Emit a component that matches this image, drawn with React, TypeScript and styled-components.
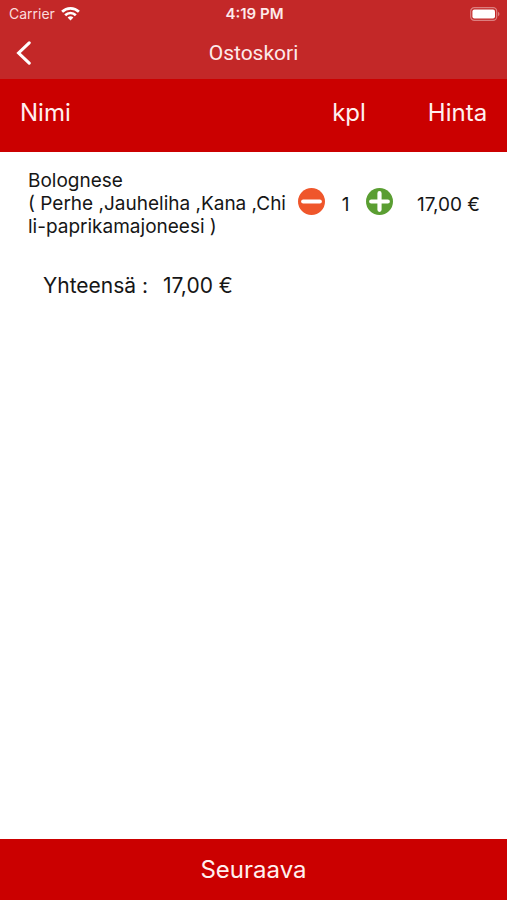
import React, { useState } from "react";
import styled, { createGlobalStyle } from "styled-components";

const GlobalStyle = createGlobalStyle`
  * { box-sizing: border-box; }
  body {
    margin: 0;
    background: #fff;
    color: #161616;
    font-family: Inter, "Liberation Sans", sans-serif;
  }
  button { font: inherit; border: 0; padding: 0; cursor: pointer; }
`;

const Screen = styled.div`
  min-height: 100vh;
  display: flex;
  flex-direction: column;
`;

const TopBar = styled.header`
  background: #c32828;
  color: #fff;
`;

const StatusBar = styled.div`
  height: 28px;
  padding: 0 7px 0 9px;
  display: grid;
  grid-template-columns: 1fr auto 1fr;
  align-items: center;
  font-size: 14px;
  line-height: 20px;
`;

const Carrier = styled.span`
  display: flex;
  align-items: center;
  gap: 6px;
  color: #fbdcdc;
`;

const Clock = styled.span`
  font-size: 15px;
  font-weight: 600;
  color: #fdeaea;
`;

const Battery = styled.span`
  justify-self: end;
  display: flex;
`;

const NavBar = styled.nav`
  height: 51px;
  padding: 0 12px 2px;
  display: grid;
  grid-template-columns: 1fr auto 1fr;
  align-items: center;
`;

const BackButton = styled.button`
  justify-self: start;
  width: 24px;
  height: 32px;
  display: flex;
  align-items: center;
  justify-content: center;
  background: none;
  color: #fff;
`;

const Title = styled.h1`
  margin: 0;
  font: 400 21px/28px Roboto, "Liberation Sans", sans-serif;
  color: #fdeaea;
`;

const Content = styled.main`
  flex: 1;
`;

const CartTable = styled.table`
  width: 100%;
  table-layout: fixed;
  border-collapse: collapse;
`;

const QuantityColumn = styled.col`
  width: 112px;
`;

const PriceColumn = styled.col`
  width: 105px;
`;

const HeadRow = styled.tr`
  height: 73px;
  background: #cb0000;
  color: #fff0f0;
`;

const HeadCell = styled.th<{ $align?: "left" | "center" }>`
  padding: 0 0 6px ${(p) => (p.$align === "left" ? 20 : 6)}px;
  text-align: ${(p) => p.$align ?? "center"};
  font-size: 24px;
  line-height: 28px;
  font-weight: 400;
`;

const NameCell = styled.td`
  padding: 17px 2px 12px 28px;
  font-size: 19px;
  line-height: 23px;
  word-break: break-all;
`;

const QuantityCell = styled.td`
  padding: 0;
`;

const Stepper = styled.div`
  display: flex;
  align-items: center;
  justify-content: space-between;
  padding: 0 9px 0 8px;
`;

const Quantity = styled.output`
  padding-top: 6px;
  font-size: 19px;
  line-height: 23px;
`;

const StepButton = styled.button<{ $color: string }>`
  width: 27px;
  height: 27px;
  display: flex;
  border-radius: 50%;
  background: ${(p) => p.$color};
`;

const PriceCell = styled.td`
  padding: 6px 12px 0 0;
  text-align: center;
  white-space: nowrap;
  font-size: 19px;
  line-height: 23px;
`;

const Total = styled.p`
  margin: 0;
  padding: 22px 43px;
  display: flex;
  gap: 15px;
  font-size: 21px;
  line-height: 28px;
`;

const NextButton = styled.button`
  height: 61px;
  background: #cb0000;
  color: #fff0f0;
  && { font-size: 24px; line-height: 28px; }
`;

const UNIT_PRICE = 17;
const euros = (value: number) => `${value.toFixed(2).replace(".", ",")} €`;

const WifiIcon = () => (
  <svg width="19" height="14" viewBox="0 0 19 14" aria-hidden="true">
    <g fill="none" stroke="#fff" strokeWidth="2.7">
      <path d="M1.1 4.8a12 12 0 0 1 16.8 0" />
      <path d="M4.2 8.2a7.5 7.5 0 0 1 10.6 0" />
    </g>
    <path d="M9.5 13.6 6.6 10.6a4.1 4.1 0 0 1 5.8 0z" fill="#fff" />
  </svg>
);

const BatteryIcon = () => (
  <svg width="30" height="14" viewBox="0 0 30 14" aria-hidden="true">
    <rect x="0.7" y="0.7" width="26" height="12.6" rx="3.6" fill="none" stroke="#dc7f7f" strokeWidth="1.2" />
    <rect x="2.4" y="2.4" width="22.6" height="9.2" rx="2" fill="#fff" />
    <path d="M28 4.8c2 .8 2 3.6 0 4.4z" fill="#dc7f7f" />
  </svg>
);

const BackIcon = () => (
  <svg width="16" height="24" viewBox="0 0 16 24" aria-hidden="true">
    <path d="M13.2 1.8 2.6 12l10.6 10.2" fill="none" stroke="#fff" strokeWidth="3.1" strokeLinecap="round" />
  </svg>
);

const StepIcon = ({ plus }: { plus?: boolean }) => (
  <svg width="27" height="27" viewBox="0 0 27 27" aria-hidden="true">
    <path
      d={plus ? "M5.2 13.5h16.6M13.5 5.2v16.6" : "M5.2 13.5h16.6"}
      fill="none"
      stroke="#fff"
      strokeWidth="4.2"
      strokeLinecap="round"
    />
  </svg>
);

export default function App() {
  const [quantity, setQuantity] = useState(1);

  return (
    <Screen>
      <GlobalStyle />
      <TopBar>
        <StatusBar>
          <Carrier>
            Carrier <WifiIcon />
          </Carrier>
          <Clock>4:19 PM</Clock>
          <Battery>
            <BatteryIcon />
          </Battery>
        </StatusBar>
        <NavBar>
          <BackButton type="button" aria-label="Takaisin">
            <BackIcon />
          </BackButton>
          <Title>Ostoskori</Title>
        </NavBar>
      </TopBar>
      <Content>
        <CartTable>
          <colgroup>
            <col />
            <QuantityColumn />
            <PriceColumn />
          </colgroup>
          <thead>
            <HeadRow>
              <HeadCell $align="left">Nimi</HeadCell>
              <HeadCell>kpl</HeadCell>
              <HeadCell>Hinta</HeadCell>
            </HeadRow>
          </thead>
          <tbody>
            <tr>
              <NameCell>
                Bolognese
                <br />( Perhe ,Jauheliha ,Kana ,Chili-paprikamajoneesi )
              </NameCell>
              <QuantityCell>
                <Stepper>
                  <StepButton
                    type="button"
                    $color="#ef562b"
                    aria-label="Vähennä"
                    onClick={() => setQuantity((n) => Math.max(0, n - 1))}
                  >
                    <StepIcon />
                  </StepButton>
                  <Quantity>{quantity}</Quantity>
                  <StepButton
                    type="button"
                    $color="#5a9e32"
                    aria-label="Lisää"
                    onClick={() => setQuantity((n) => n + 1)}
                  >
                    <StepIcon plus />
                  </StepButton>
                </Stepper>
              </QuantityCell>
              <PriceCell>{euros(UNIT_PRICE * quantity)}</PriceCell>
            </tr>
          </tbody>
        </CartTable>
        <Total>
          <span>Yhteensä :</span>
          <span>{euros(UNIT_PRICE * quantity)}</span>
        </Total>
      </Content>
      <NextButton type="button">Seuraava</NextButton>
    </Screen>
  );
}
